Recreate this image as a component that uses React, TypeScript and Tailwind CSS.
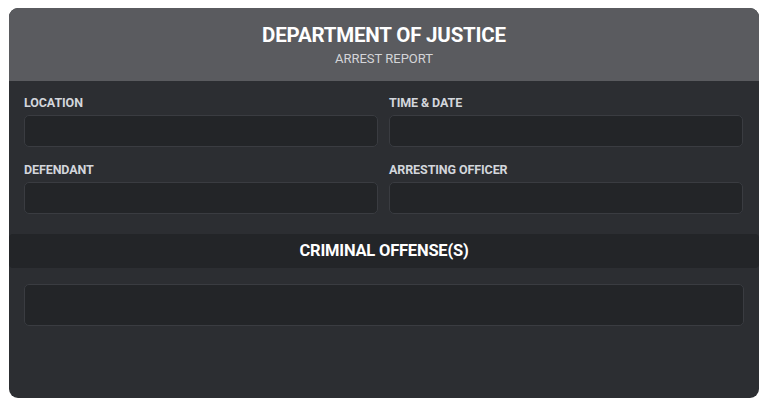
const rows = [
  ['LOCATION', 'TIME & DATE'],
  ['DEFENDANT', 'ARRESTING OFFICER'],
];

function Field({ label }: { label: string }) {
  return (
    <div className="flex flex-col gap-[4px]">
      <span className="text-[12.5px] leading-[16px] font-bold tracking-[-0.1px] text-[#d3d6dc]">{label}</span>
      <div className="h-[32px] rounded-[5px] border border-[#3a3c41] bg-[#232528]" />
    </div>
  );
}

export default function App() {
  return (
    <div className="min-h-screen bg-white pl-[9px] pt-[8px] font-['Roboto',sans-serif]">
      <div className="w-[750px] h-[390px] rounded-[9px] overflow-hidden bg-[#2c2e32] flex flex-col">
        <div className="h-[73px] bg-[#5a5b5f] flex flex-col items-center pt-[15px]">
          <h1 className="text-[20.5px] leading-[24px] font-bold tracking-[-0.2px] text-white">DEPARTMENT OF JUSTICE</h1>
          <p className="mt-[4px] text-[13px] leading-[15px] text-[#d4d5d8]">ARREST REPORT</p>
        </div>

        <div className="px-[15px] pt-[14px] flex flex-col gap-[15px]">
          {rows.map((r) => (
            <div key={r[0]} className="grid grid-cols-[354px_354px] gap-[11px]">
              {r.map((l) => (
                <Field key={l} label={l} />
              ))}
            </div>
          ))}
        </div>

        <div className="mt-[20px] h-[34px] rounded-[4px] bg-[#232528] flex items-center justify-center">
          <span className="text-[16.5px] font-bold tracking-[-0.2px] text-white">CRIMINAL OFFENSE(S)</span>
        </div>

        <div className="px-[15px] mt-[16px]">
          <div className="h-[42px] rounded-[5px] border border-[#3a3c41] bg-[#232528]" />
        </div>
      </div>
    </div>
  );
}
